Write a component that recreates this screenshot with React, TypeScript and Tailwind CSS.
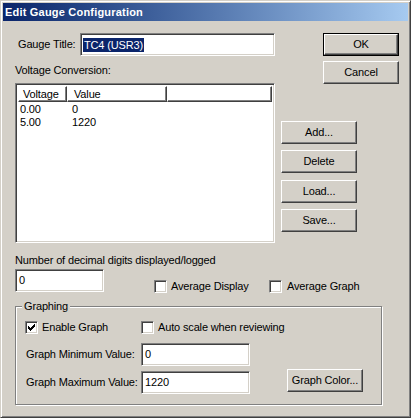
import React from "react";

const sunken =
  "border border-t-[#808080] border-l-[#808080] border-r-white border-b-white shadow-[inset_1px_1px_0_#404040,inset_-1px_-1px_0_#D4D0C8] bg-white";

function Btn({ children, def = false, className = "" }: { children: React.ReactNode; def?: boolean; className?: string }) {
  if (def) {
    return (
      <div className={`w-[76px] h-[23px] border border-black flex ${className}`}>
        <div className="flex-1 flex items-center justify-center border border-t-white border-l-white border-r-[#404040] border-b-[#404040] shadow-[inset_-1px_-1px_0_#808080]">
          {children}
        </div>
      </div>
    );
  }
  return (
    <div
      className={`w-[76px] h-[23px] flex items-center justify-center border border-t-white border-l-white border-r-[#404040] border-b-[#404040] shadow-[inset_-1px_-1px_0_#808080] ${className}`}
    >
      {children}
    </div>
  );
}

function Check({ checked = false }: { checked?: boolean }) {
  return (
    <div className={`w-[13px] h-[13px] shrink-0 flex items-center justify-center ${sunken}`}>
      {checked && (
        <svg width="7" height="7" viewBox="0 0 7 7" shapeRendering="crispEdges">
          <rect x="6" y="0" width="1" height="3" fill="#000" />
          <rect x="5" y="1" width="1" height="3" fill="#000" />
          <rect x="4" y="2" width="1" height="3" fill="#000" />
          <rect x="3" y="3" width="1" height="3" fill="#000" />
          <rect x="2" y="4" width="1" height="3" fill="#000" />
          <rect x="1" y="3" width="1" height="3" fill="#000" />
          <rect x="0" y="2" width="1" height="3" fill="#000" />
        </svg>
      )}
    </div>
  );
}

function HeaderCell({ children, className = "" }: { children?: React.ReactNode; className?: string }) {
  return (
    <div
      className={`h-[16px] flex items-center border border-t-white border-l-white border-r-[#404040] border-b-[#404040] shadow-[inset_-1px_-1px_0_#808080] ${className}`}
    >
      {children}
    </div>
  );
}

export default function App() {
  return (
    <div className="w-[411px] h-[418px] bg-[#D4D0C8] text-black font-['Liberation_Sans',Arial,sans-serif] text-[11px] leading-[13px] tracking-[-0.15px]">
      <div className="w-[411px] h-[418px] border border-t-[#D4D0C8] border-l-[#D4D0C8] border-r-[#404040] border-b-[#404040] p-[2px] shadow-[inset_1px_1px_0_#fff,inset_-1px_-1px_0_#808080] flex flex-col">
        <div className="h-[18px] bg-gradient-to-r from-[#0A246A] to-[#A6CAF0] text-white font-bold tracking-[0.2px] pl-[2px] flex items-center">
          Edit Gauge Configuration
        </div>
        <div className="flex-1 pl-[12px] pt-[12px] flex flex-col">
          {/* top section */}
          <div className="flex">
            <div className="w-[260px] flex flex-col">
              <div className="h-[23px] flex items-center">
                <div className="w-[65px] pl-[3px]">Gauge Title:</div>
                <div className={`w-[195px] h-[23px] flex items-center pl-[2px] ${sunken}`}>
                  <span className="bg-[#0A246A] text-white px-[1px] leading-[14px]">TC4 (USR3)</span>
                </div>
              </div>
              <div className="mt-[8px] h-[13px]">Voltage Conversion:</div>
              <div className={`mt-[6px] w-[260px] h-[160px] p-[2px] ${sunken}`}>
                <div className="flex">
                  <HeaderCell className="w-[49px] pl-[4px]">Voltage</HeaderCell>
                  <HeaderCell className="w-[100px] pl-[6px]">Value</HeaderCell>
                  <HeaderCell className="flex-1" />
                </div>
                <div className="flex flex-col pt-[1px]">
                  <div className="flex h-[13px]">
                    <div className="w-[49px] pl-[2px]">0.00</div>
                    <div className="pl-[5px]">0</div>
                  </div>
                  <div className="flex h-[13px]">
                    <div className="w-[49px] pl-[2px]">5.00</div>
                    <div className="pl-[5px]">1220</div>
                  </div>
                </div>
              </div>
            </div>
            <div className="flex flex-col items-start">
              <Btn def className="ml-[48px]">OK</Btn>
              <Btn className="ml-[48px] mt-[5px]">Cancel</Btn>
              <Btn className="ml-[6px] mt-[37px]">Add...</Btn>
              <Btn className="ml-[6px] mt-[6px]">Delete</Btn>
              <Btn className="ml-[6px] mt-[7px]">Load...</Btn>
              <Btn className="ml-[6px] mt-[6px]">Save...</Btn>
            </div>
          </div>

          {/* decimal digits */}
          <div className="mt-[11px] h-[13px]">Number of decimal digits displayed/logged</div>
          <div className="mt-[2px] flex items-start">
            <div className={`w-[89px] h-[23px] flex items-center pl-[3px] ${sunken}`}>0</div>
            <div className="ml-[50px] mt-[11px] w-[115px] flex items-center gap-[4px]">
              <Check />
              <span>Average Display</span>
            </div>
            <div className="mt-[11px] flex items-center gap-[5px]">
              <Check />
              <span>Average Graph</span>
            </div>
          </div>

          {/* graphing group */}
          <div className="mt-[13px] relative w-[367px] h-[99px] border border-[#808080] shadow-[1px_1px_0_#fff,inset_1px_1px_0_#fff] pl-[9px] pt-[14px]">
            <div className="absolute -top-[7px] left-[6px] bg-[#D4D0C8] px-[2px]">Graphing</div>
            <div className="flex items-center h-[13px]">
              <div className="w-[116px] flex items-center gap-[4px]">
                <Check checked />
                <span>Enable Graph</span>
              </div>
              <div className="flex items-center gap-[4px]">
                <Check />
                <span>Auto scale when reviewing</span>
              </div>
            </div>
            <div className="mt-[9px] flex items-center">
              <div className="w-[116px] pl-[1px]">Graph Minimum Value:</div>
              <div className={`w-[109px] h-[23px] flex items-center pl-[3px] ${sunken}`}>0</div>
            </div>
            <div className="mt-[5px] flex items-start">
              <div className="w-[116px] pl-[1px] h-[23px] flex items-center">Graph Maximum Value:</div>
              <div className={`w-[109px] h-[23px] flex items-center pl-[3px] ${sunken}`}>1220</div>
              <Btn className="ml-[37px] -mt-[2px]">Graph Color...</Btn>
            </div>
          </div>
        </div>
      </div>
    </div>
  );
}
